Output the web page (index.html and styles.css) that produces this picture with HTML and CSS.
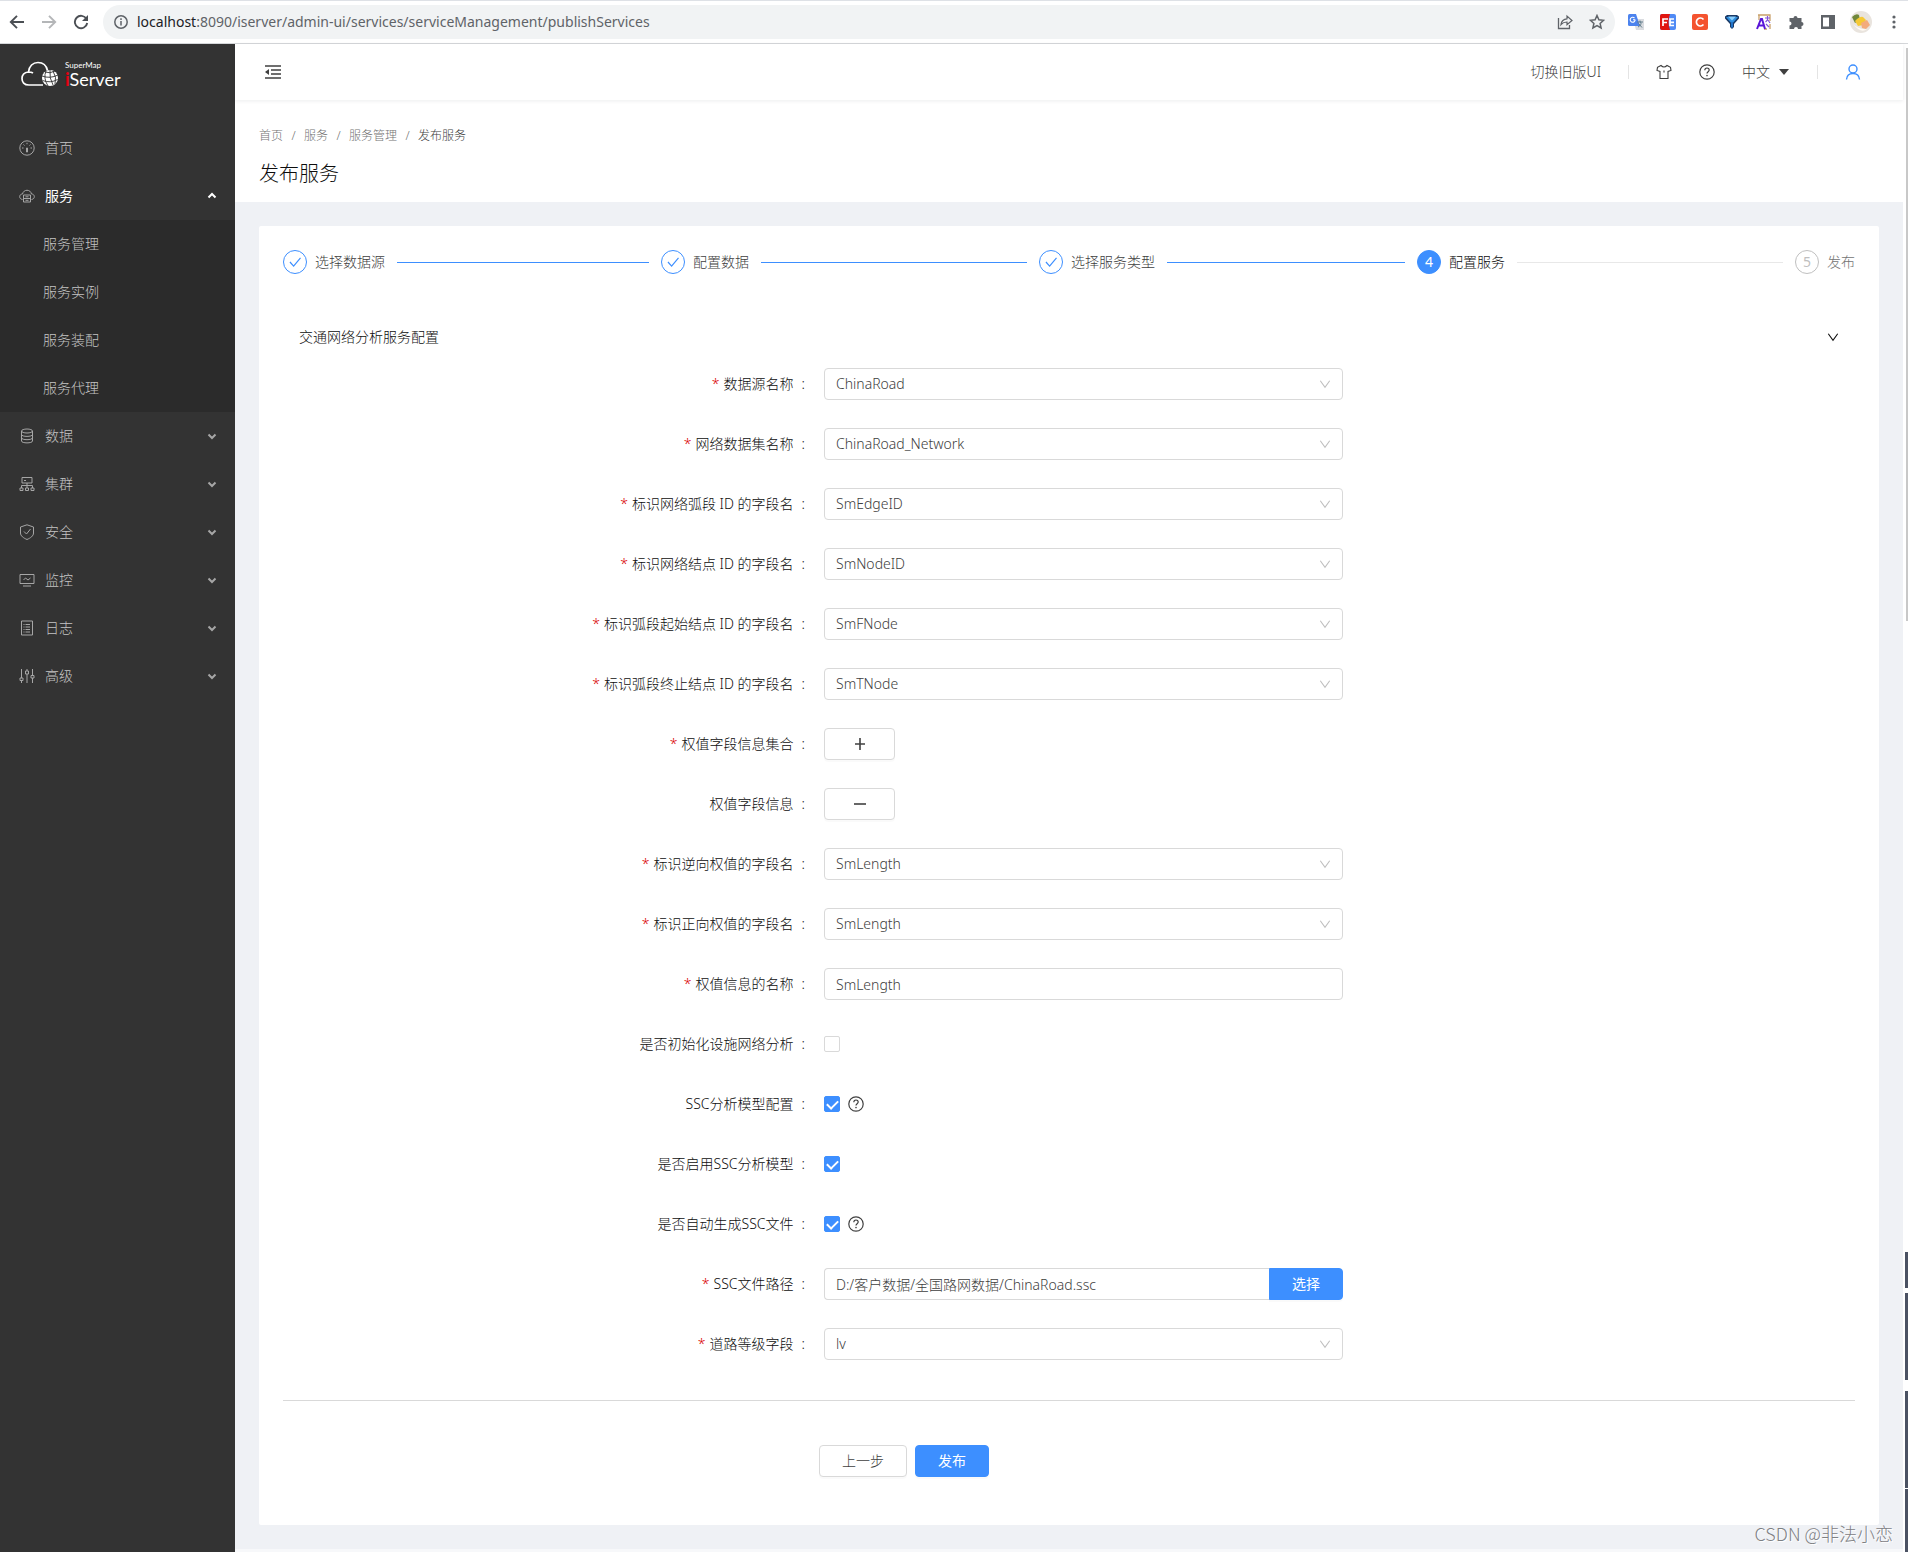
FILE: index.html
```html
<!DOCTYPE html>
<html lang="zh-CN">
<head>
<meta charset="utf-8">
<title>发布服务 - SuperMap iServer</title>
<link rel="stylesheet" href="styles.css">
</head>
<body>
<svg class="defs" aria-hidden="true">
  <symbol id="chevron" viewBox="0 0 12 12"><path d="M1.300 2.800 6 9.300 10.700 2.800" fill="none" stroke="currentColor" stroke-width="1.100"/></symbol>
  <symbol id="arrow" viewBox="0 0 12 12"><path d="M2.500 4.500 6 8 9.500 4.500" fill="none" stroke="currentColor" stroke-width="2"/></symbol>
  <symbol id="check" viewBox="0 0 24 24"><path d="M6.500 12 10.500 16.500 18 7.500" fill="none" stroke="currentColor" stroke-width="1.300"/></symbol>
  <symbol id="help" viewBox="0 0 16 16"><circle cx="8" cy="8" r="7.200" fill="none" stroke="currentColor" stroke-width="1.200"/><path d="M5.800 6.300c0-3 4.400-3 4.400-.2 0 1.700-2.200 1.500-2.200 3.400" fill="none" stroke="currentColor" stroke-width="1.200"/><circle cx="8" cy="11.600" r=".8" fill="currentColor"/></symbol>
</svg>

<div class="browser">
  <button class="nav-btn" aria-label="后退"><svg viewBox="0 0 16 16"><path d="M15 8H2M8 1.800 1.800 8 8 14.200" fill="none" stroke="currentColor" stroke-width="1.900"/></svg></button>
  <button class="nav-btn nav-off" aria-label="前进"><svg viewBox="0 0 16 16"><path d="M1 8h13M8 1.800 14.200 8 8 14.200" fill="none" stroke="currentColor" stroke-width="1.900"/></svg></button>
  <button class="nav-btn" aria-label="刷新"><svg viewBox="0 0 16 16"><path d="M13.500 5A6.200 6.200 0 1 0 14.200 9" fill="none" stroke="currentColor" stroke-width="1.900"/><path d="M15 1v6H9z" fill="currentColor"/></svg></button>
  <div class="address">
    <svg class="ico14" viewBox="0 0 14 14"><circle cx="7" cy="7" r="6.200" fill="none" stroke="currentColor" stroke-width="1.500"/><path d="M7 6v4.500M7 3.300v1.600" stroke="currentColor" stroke-width="1.500"/></svg>
    <span class="url"><b>localhost</b>:8090/iserver/admin-ui/services/serviceManagement/publishServices</span>
    <svg class="ico16" viewBox="0 0 16 16"><path d="M1.500 4v10.500h11V11" fill="none" stroke="currentColor" stroke-width="1.300"/><path d="M4 10.500C4.500 7 6.500 5 10 4.800V2l5 4.500-5 4.300V8C7.500 8 5.500 8.800 4 10.500z" fill="none" stroke="currentColor" stroke-width="1.200"/></svg>
    <svg class="ico16" viewBox="0 0 16 16"><path d="m8 1.500 1.900 4.300 4.700.5-3.500 3.100 1 4.600L8 11.600 3.900 14l1-4.600L1.400 6.300l4.700-.5z" fill="none" stroke="currentColor" stroke-width="1.500"/></svg>
  </div>
  <div class="extensions">
    <svg viewBox="0 0 16 16"><path d="M5 5h11v11H8z" fill="#dadce0"/><path d="M0 1.500Q0 0 1.500 0H8l4 12H1.500Q0 12 0 10.500z" fill="#4c83ee"/><path d="M7.200 5.800H5M7.200 5.800A2.500 2.500 0 1 1 6.500 4" fill="none" stroke="#fff" stroke-width="1.100"/><path d="M9 8h6M12 6.500V8c2 0 1 4-2 5M10.500 9.500 14 13.500" fill="none" stroke="#607d8b"/></svg>
    <svg viewBox="0 0 16 16"><rect width="16" height="16" rx="2" fill="#4f8af5"/><path d="M2 0h8q-3 8 0 16H2q-2 0-2-2V2q0-2 2-2z" fill="#e0150f"/><path d="M3 12V5h5M3 8.500h4M14 5h-4v6.500h4M10 8.300h4" fill="none" stroke="#fff" stroke-width="1.700"/></svg>
    <svg viewBox="0 0 16 16"><rect width="16" height="16" rx="2" fill="#f4532f"/><path d="M11.500 5.500A4 4 0 1 0 11.500 10.500" fill="none" stroke="#fff" stroke-width="1.700"/></svg>
    <svg viewBox="0 0 16 16"><path d="M1 2.500 3 1h10l2 1.500v2L10 10v3l-2 2-2-2v-3L1 4.500z" fill="#1a3a66"/><path d="M2 3h12L8 10z" fill="#2f8fe0"/><path d="M7 8h2v5l-1 1-1-1z" fill="#2273c8"/><path d="m4 2.500 4 4 4-4z" fill="#8bd0ff"/></svg>
    <svg viewBox="0 0 16 16"><path d="M2 1h12v6M3 1v5M14 10v5M8 15h3" fill="none" stroke="#c9a06a" stroke-width="1.300"/><path d="M1 15 5 5h1l3 10M3 11.500h5" fill="none" stroke="#5a16d8" stroke-width="2"/><path d="M9 4h5M11.500 2v4l-2 2M12 6l2 3M10 10l3 3" fill="none" stroke="#8454d8" stroke-width="1.200"/></svg>
    <svg viewBox="0 0 16 16"><path d="M1.500 4h4a2 2 0 1 1 4 0h4v4a2 2 0 1 1 0 4v3H10a2 2 0 0 0-4 0H1.500v-3.500a2 2 0 0 0 0-4z" fill="#5f6368"/></svg>
    <svg viewBox="0 0 16 16"><path d="M1 1h14v14H1zm2 2.500v9h6v-9z" fill="#5f6368" fill-rule="evenodd"/></svg>
    <svg class="avatar" viewBox="0 0 22 22"><circle cx="11" cy="11" r="11" fill="#e9e4de"/><path d="M2 6q4-4 7-2l1 5-5 3z" fill="#71883c"/><path d="M5 10q5-5 8-4l3 3-3 5-5 1z" fill="#f6c935"/><path d="m11 12 6-3 3 5-4 4-4-1z" fill="#f3ab7c"/><path d="M3 13q6 6 14 5-6 5-14-5z" fill="#fffaf3"/></svg>
    <svg viewBox="0 0 16 16"><g fill="#5f6368"><circle cx="8" cy="3" r="1.600"/><circle cx="8" cy="8" r="1.600"/><circle cx="8" cy="13" r="1.600"/></g></svg>
  </div>
</div>

<div class="app">
  <aside class="sidebar">
    <a class="logo" href="#" aria-label="SuperMap iServer">
      <svg class="logo-mark" viewBox="0 0 38 26"><path d="M22 24H8C3 24 1 21 1 17.500c0-3.500 2.500-6 6.500-6.500C8 5 12 1.500 17 1.500c5.500 0 8.500 3.500 9.500 8M7.500 11q3 0 4.500 1" fill="none" stroke="#fff" stroke-width="1.700"/><circle cx="29" cy="17" r="8" fill="#fff"/><path d="M21 15q8 3 16-1M21.500 19.500q8 3 15-1M24 11q5 2 10-1M25 10q-3 7 2 15M29 9q-1 8 3 15M32 10q4 6 2 13" fill="none" stroke="#333" stroke-width=".9"/></svg>
      <span class="logo-text"><small>SuperMap</small><span class="logo-name"><i>i</i>Server</span></span>
    </a>
    <nav class="menu">
      <a class="item" href="#"><svg viewBox="0 0 16 16"><circle cx="8" cy="8" r="7.200"/><path d="M3 8h1.500M11.500 8H13M4.500 4.500l1 1M11.500 4.500l-1 1M8 2.800v1.400M7.500 8h1v4h-1z"/></svg><span>首页</span></a>
      <a class="item open" href="#"><svg viewBox="0 0 16 16"><path d="M3.500 11.500C-.5 11 0 6 3.500 6 4.500 1 11.500 1 12.500 6c3.500 0 4 5 0 5.500M4.500 7h7v7h-7zM4.500 10.500h7M6.500 8.800h3M6.500 12.300h3"/></svg><span>服务</span><svg class="arrow up"><use href="#arrow"/></svg></a>
      <div class="submenu">
        <a href="#">服务管理</a>
        <a href="#">服务实例</a>
        <a href="#">服务装配</a>
        <a href="#">服务代理</a>
      </div>
      <a class="item" href="#"><svg viewBox="0 0 16 16"><ellipse cx="8" cy="3" rx="5.500" ry="2"/><path d="M2.500 3v10c0 2.500 11 2.500 11 0V3M2.500 6.500c0 2.500 11 2.500 11 0M2.500 9.800c0 2.500 11 2.500 11 0"/></svg><span>数据</span><svg class="arrow"><use href="#arrow"/></svg></a>
      <a class="item" href="#"><svg viewBox="0 0 16 16"><path d="M3 1.500h10v5.500H3zM5 4.500h2M8 7v5M2.500 12V9.500h11V12M1 12h3v2.500H1zM6.500 12h3v2.500h-3zM12 12h3v2.500h-3z"/></svg><span>集群</span><svg class="arrow"><use href="#arrow"/></svg></a>
      <a class="item" href="#"><svg viewBox="0 0 16 16"><path d="M8 .8 14.500 3v6c0 3-3 5-6.500 6.500C4.500 14 1.500 12 1.500 9V3zM5 7.500l2.500 2.500L11.500 5"/></svg><span>安全</span><svg class="arrow"><use href="#arrow"/></svg></a>
      <a class="item" href="#"><svg viewBox="0 0 16 16"><path d="M1 2.500h14v9H1zM4 14h8M4.500 8l2-2 2.500 2L11.500 6"/></svg><span>监控</span><svg class="arrow"><use href="#arrow"/></svg></a>
      <a class="item" href="#"><svg viewBox="0 0 16 16"><path d="M2.500 1h11v14h-11zM6.500 4.500H11M6.500 7H11M6.500 9.500H11M6.500 12H11M4.500 4.500h1M4.500 7h1M4.500 9.500h1M4.500 12h1"/></svg><span>日志</span><svg class="arrow"><use href="#arrow"/></svg></a>
      <a class="item" href="#"><svg viewBox="0 0 16 16"><path d="M2.500 1v9M2.500 13v2M8 1v2M8 6v9M13.500 1v6M13.500 10v5M1 10h3v2.500H1zM6.500 3h3v3h-3zM12 7.500h3V10h-3z"/></svg><span>高级</span><svg class="arrow"><use href="#arrow"/></svg></a>
    </nav>
  </aside>

  <div class="main">
    <header class="topbar">
      <button class="fold" aria-label="收起菜单"><svg viewBox="0 0 16 14"><path d="M0 1h16M6 5h10M6 9h10M0 13h16" stroke="currentColor" stroke-width="1.400"/><path d="M0 7l4-3v6z" fill="currentColor"/></svg></button>
      <div class="tools">
        <a href="#">切换旧版UI</a>
        <span class="sep"></span>
        <button aria-label="主题"><svg viewBox="0 0 16 16"><path d="M5 1.500Q8 4.500 11 1.500l3.500 1.800.5 3.200-3 1V14.500H4V7.500l-3-1 .5-3.200zM8 6.500v2" fill="none" stroke="currentColor" stroke-width="1.100"/></svg></button>
        <button class="help-btn" aria-label="帮助"><svg><use href="#help"/></svg></button>
        <button class="lang">中文<svg viewBox="0 0 12 8"><path d="M1 1h10L6 7z" fill="currentColor"/></svg></button>
        <span class="sep"></span>
        <button class="user" aria-label="用户"><svg viewBox="0 0 16 16"><circle cx="8" cy="5" r="4"/><path d="M1.500 15.500C1.800 11.500 4 9.500 8 9.500s6.200 2 6.500 6"/></svg></button>
      </div>
    </header>

    <div class="page-head">
      <nav class="crumbs"><a href="#">首页</a><span>/</span><a href="#">服务</a><span>/</span><a href="#">服务管理</a><span>/</span><em>发布服务</em></nav>
      <h1>发布服务</h1>
    </div>

    <main class="content">
      <section class="card">
        <ol class="steps">
          <li class="done"><svg class="dot"><use href="#check"/></svg><span>选择数据源</span></li>
          <li class="done"><svg class="dot"><use href="#check"/></svg><span>配置数据</span></li>
          <li class="done"><svg class="dot"><use href="#check"/></svg><span>选择服务类型</span></li>
          <li class="current"><b class="dot">4</b><span>配置服务</span></li>
          <li class="wait"><b class="dot">5</b><span>发布</span></li>
        </ol>

        <button class="panel-head"><span>交通网络分析服务配置</span><svg><use href="#chevron"/></svg></button>

        <form class="form">
          <div class="row"><label class="required" for="ds">数据源名称</label><div class="select"><select id="ds"><option>ChinaRoad</option></select><svg><use href="#chevron"/></svg></div></div>
          <div class="row"><label class="required" for="net">网络数据集名称</label><div class="select"><select id="net"><option>ChinaRoad_Network</option></select><svg><use href="#chevron"/></svg></div></div>
          <div class="row"><label class="required" for="edge">标识网络弧段 ID 的字段名</label><div class="select"><select id="edge"><option>SmEdgeID</option></select><svg><use href="#chevron"/></svg></div></div>
          <div class="row"><label class="required" for="node">标识网络结点 ID 的字段名</label><div class="select"><select id="node"><option>SmNodeID</option></select><svg><use href="#chevron"/></svg></div></div>
          <div class="row"><label class="required" for="fnode">标识弧段起始结点 ID 的字段名</label><div class="select"><select id="fnode"><option>SmFNode</option></select><svg><use href="#chevron"/></svg></div></div>
          <div class="row"><label class="required" for="tnode">标识弧段终止结点 ID 的字段名</label><div class="select"><select id="tnode"><option>SmTNode</option></select><svg><use href="#chevron"/></svg></div></div>
          <div class="row"><label class="required" for="add">权值字段信息集合</label><div><button type="button" class="btn small" id="add" aria-label="添加"><svg viewBox="0 0 12 12"><path d="M1 6h10M6 0v12"/></svg></button></div></div>
          <div class="row"><label for="remove">权值字段信息</label><div><button type="button" class="btn small" id="remove" aria-label="删除"><svg viewBox="0 0 12 12"><path d="M0 6h12"/></svg></button></div></div>
          <div class="row"><label class="required" for="back">标识逆向权值的字段名</label><div class="select"><select id="back"><option>SmLength</option></select><svg><use href="#chevron"/></svg></div></div>
          <div class="row"><label class="required" for="forward">标识正向权值的字段名</label><div class="select"><select id="forward"><option>SmLength</option></select><svg><use href="#chevron"/></svg></div></div>
          <div class="row"><label class="required" for="weight">权值信息的名称</label><input class="text" id="weight" type="text" value="SmLength"></div>
          <div class="row"><label for="facility">是否初始化设施网络分析</label><div class="check"><input type="checkbox" id="facility"></div></div>
          <div class="row"><label for="ssc">SSC分析模型配置</label><div class="check"><input type="checkbox" id="ssc" checked><svg><use href="#help"/></svg></div></div>
          <div class="row"><label for="sscon">是否启用SSC分析模型</label><div class="check"><input type="checkbox" id="sscon" checked></div></div>
          <div class="row"><label for="sscauto">是否自动生成SSC文件</label><div class="check"><input type="checkbox" id="sscauto" checked><svg><use href="#help"/></svg></div></div>
          <div class="row"><label class="required" for="path">SSC文件路径</label><div class="file"><input class="text" id="path" type="text" value="D:/客户数据/全国路网数据/ChinaRoad.ssc"><button type="button" class="btn primary">选择</button></div></div>
          <div class="row"><label class="required" for="level">道路等级字段</label><div class="select"><select id="level"><option>lv</option></select><svg><use href="#chevron"/></svg></div></div>
        </form>

        <div class="actions">
          <div class="action-buttons"><button class="btn">上一步</button><button class="btn primary">发布</button></div>
        </div>
      </section>
    </main>
  </div>

  <div class="edge">
    <div class="thumb"></div>
    <div class="strip s1"></div>
    <div class="strip s2"></div>
    <div class="strip s3"></div>
    <div class="strip s4"></div>
  </div>
</div>
<div class="watermark">CSDN @非法小恋</div>
</body>
</html>
```
FILE: styles.css
```css
* { box-sizing: border-box; }

:root {
  --blue: #3d8fff;
  --line: #d9d9d9;
  --text: #0d0d0d;
  --muted: #404040;
  --latin: "Noto Sans", "Noto Sans CJK SC", sans-serif;
}

body {
  margin: 0;
  min-height: 100vh;
  display: flex;
  flex-direction: column;
  position: relative;
  overflow-x: hidden;
  background: #f7f8fa;
  color: var(--muted);
  font: 300 14px/22px "Noto Sans", "Noto Sans CJK SC", sans-serif;
}

a { color: inherit; text-decoration: none; }
svg { display: block; flex: none; }
button { border: 0; padding: 0; background: none; color: inherit; font: inherit; }
input, select { font: inherit; color: inherit; }
.defs { display: none; }

/* Browser toolbar */
.browser {
  display: flex;
  align-items: center;
  height: 44px;
  padding: 0 6px 0 9px;
  border-top: 1px solid #dee1e6;
  border-bottom: 1px solid #d5d7da;
  background: #fff;
  color: #5f6368;
}
.nav-btn { width: 16px; margin-right: 16px; color: #4b4f54; }
.nav-btn:nth-child(3) { margin-right: 14px; }
.nav-btn svg { width: 16px; height: 16px; }
.nav-off { color: #b4b6b8; }
.address {
  flex: 1;
  display: flex;
  align-items: center;
  gap: 16px;
  height: 34px;
  padding: 0 10px 0 11px;
  border-radius: 17px;
  background: #f1f3f4;
}
.ico14 { width: 14px; height: 14px; margin-right: -7px; }
.ico16 { width: 16px; height: 16px; }
.url { flex: 1; font: 400 14px/20px var(--latin); }
.url b { font-weight: 400; color: #202124; }
.extensions { display: flex; align-items: center; gap: 16px; margin-left: 13px; }
.extensions svg { width: 16px; height: 16px; }
.extensions .avatar { width: 22px; height: 22px; margin: 0 -2px; }

/* Shell */
.app { flex: 1; display: grid; grid-template-columns: 235px minmax(0, 1fr) 5px; }

.sidebar { background: #333; color: #c4c4c4; }
.logo { display: flex; gap: 6px; height: 80px; padding: 17px 0 0 21px; color: #fff; }
.logo-mark { width: 38px; height: 26px; }
.logo-text { display: flex; flex-direction: column; font-family: Lato, sans-serif; font-weight: 400; }
.logo-text small { font-size: 8px; line-height: 8px; }
.logo-name { font-size: 18px; line-height: 20px; }
.logo-name i { font-style: normal; font-weight: 700; color: #e60012; }
.item { display: flex; align-items: center; gap: 10px; height: 48px; padding: 0 17px 0 19px; }
.item span { flex: 1; }
.item svg { width: 16px; height: 16px; fill: none; stroke: currentColor; stroke-width: 1; color: #a6a6a6; }
.item .arrow { width: 12px; height: 12px; }
.arrow.up { transform: rotate(180deg); }
.item.open, .item.open .arrow { color: #fff; }
.item.open { font-weight: 400; }
.submenu { background: #2b2b2b; }
.submenu a { display: block; line-height: 48px; padding-left: 43px; }

.main { display: flex; flex-direction: column; }
.topbar {
  position: relative;
  display: flex;
  align-items: center;
  justify-content: space-between;
  height: 56px;
  padding: 0 42px 0 30px;
  background: #fff;
  box-shadow: 0 1px 4px rgba(0, 21, 41, .08);
}
.fold svg { width: 16px; height: 14px; }
.tools { display: flex; align-items: center; gap: 27px; }
.tools svg { width: 16px; height: 16px; }
.sep { width: 1px; height: 14px; background: #e4e4e4; }
.lang { display: flex; align-items: center; gap: 8px; }
.lang svg { width: 12px; height: 8px; }
.user { color: var(--blue); }
.user svg { fill: none; stroke: currentColor; stroke-width: 1.400; }

.page-head { padding: 25px 24px 13px; background: #fff; }
.crumbs { display: flex; gap: 8px; font-size: 12px; color: #737373; }
.crumbs span { width: 5px; text-align: center; }
.crumbs em { font-style: normal; color: var(--muted); }
h1 { margin: 12px 0 0; font-size: 20px; line-height: 30px; font-weight: 300; color: var(--text); }

.content { padding: 24px; background: #eff1f5; }
.card { padding: 24px 24px 48px; border-radius: 2px; background: #fff; }

/* Steps */
.steps { display: flex; margin: 0; padding: 0; list-style: none; }
.steps li { flex: 1; display: flex; align-items: center; }
.steps li:last-child { flex: none; }
.steps li:not(:last-child)::after { content: ""; flex: 1; height: 1px; margin: 0 12px; background: #e8e8e8; }
.steps .done::after { background: var(--blue) !important; }
.dot {
  width: 24px;
  height: 24px;
  margin-right: 8px;
  border: 1px solid var(--blue);
  border-radius: 50%;
  color: var(--blue);
  font-weight: 400;
  line-height: 22px;
  text-align: center;
}
.current { color: var(--text); }
.current .dot { background: var(--blue); color: #fff; }
.wait { color: #737373; }
.wait .dot { border-color: #bfbfbf; color: #bfbfbf; }

.panel-head {
  display: flex;
  align-items: center;
  justify-content: space-between;
  width: 100%;
  height: 34px;
  margin-top: 46px;
  padding: 0 16px;
  color: var(--text);
}
.panel-head svg { width: 12px; height: 12px; }

/* Form */
.form { padding-bottom: 26px; border-bottom: 1px solid var(--line); }
.row, .actions { display: grid; grid-template-columns: 541fr 519fr 512fr; align-items: center; }
.row { height: 60px; }
.row label { padding-right: 19px; text-align: right; color: var(--text); }
.row label::after { content: ":"; margin-left: 8px; }
.required::before { content: "*"; margin-right: 4px; color: #d90000; }
.select { display: grid; align-items: center; }
.select select, .select svg { grid-area: 1 / 1; }
.select svg { width: 12px; height: 12px; justify-self: end; margin-right: 12px; color: #bfbfbf; pointer-events: none; }
.select select, .text {
  width: 100%;
  height: 32px;
  padding: 0 11px;
  border: 1px solid var(--line);
  border-radius: 4px;
  background: #fff;
  appearance: none;
  font-size: 14px;
}
.file { display: flex; }
.file .text { flex: 1; border-right: 0; border-radius: 4px 0 0 4px; }
.file .btn { border-radius: 0 4px 4px 0; }
.check { display: flex; align-items: center; gap: 8px; }
.check svg { width: 16px; height: 16px; }
.check input {
  display: grid;
  place-items: center;
  width: 16px;
  height: 16px;
  margin: 0;
  border: 1px solid var(--line);
  border-radius: 2px;
  background: #fff;
  appearance: none;
}
.check input:checked { border-color: var(--blue); background: var(--blue); }
.check input:checked::after {
  content: "";
  width: 5px;
  height: 9px;
  margin-bottom: 2px;
  border: solid #fff;
  border-width: 0 2px 2px 0;
  transform: rotate(45deg);
}

.btn {
  height: 32px;
  padding: 0 22px;
  border: 1px solid var(--line);
  border-radius: 4px;
  background: #fff;
  box-shadow: 0 2px 0 rgba(0, 0, 0, .02);
}
.btn.primary { border-color: var(--blue); background: var(--blue); color: #fff; font-weight: 400; }
.btn.small { display: grid; place-items: center; width: 71px; padding: 0; }
.btn.small svg { width: 12px; height: 12px; stroke: #404040; stroke-width: 1.600; }

.actions { grid-template-columns: 536fr 1036fr; padding-top: 44px; }
.action-buttons { grid-column: 2; display: flex; gap: 8px; }

/* Scrollbar and the windows that show at the right edge */
.edge { display: flex; flex-direction: column; align-items: flex-end; padding-top: 4px; background: #fff; }
.thumb { width: 2px; height: 573px; background: #c8c8c8; }
.strip { width: 3px; background: #4b5263; }
.s1 { height: 36px; margin-top: 631px; }
.s2 { height: 87px; margin-top: 5px; }
.s3 { height: 97px; margin-top: 11px; }
.s4 { flex: 1; margin-top: 1px; }

.watermark {
  position: absolute;
  right: 15px;
  bottom: 6px;
  color: #7e8084;
  font: 300 18px/26px "Noto Sans CJK SC", sans-serif;
  text-shadow: 1px 1px 0 #fff;
}
```
